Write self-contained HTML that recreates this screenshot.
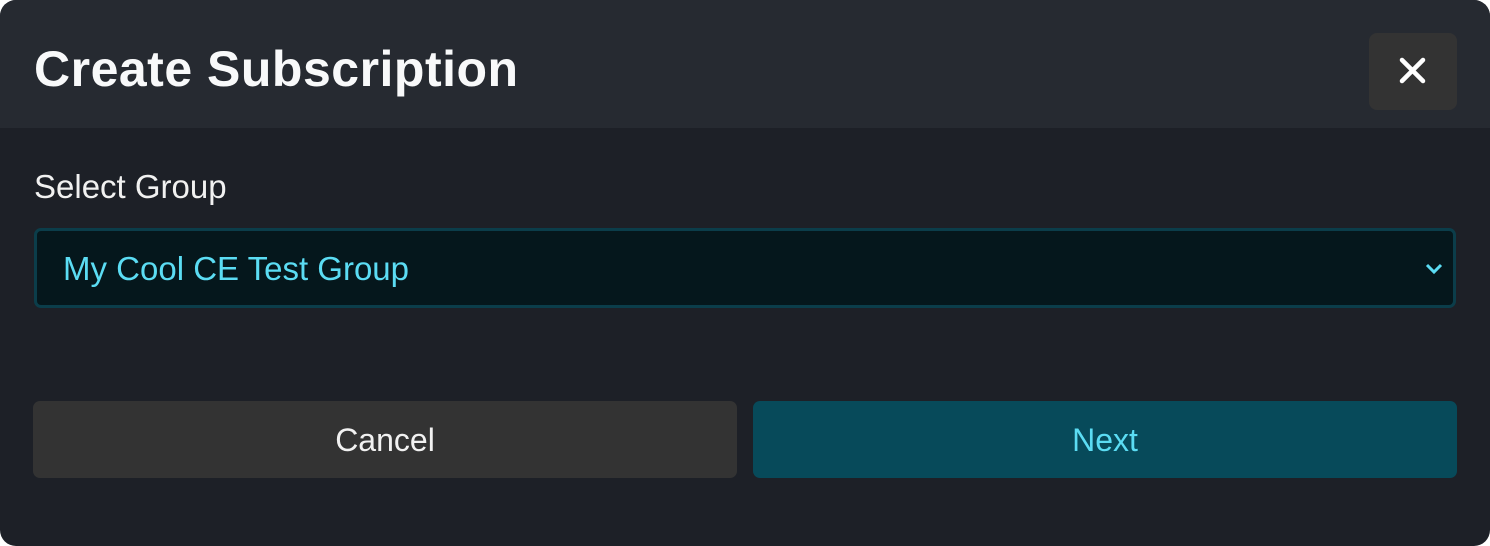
<!DOCTYPE html>
<html><head><style>
body{margin:0;background:#fff;width:1490px;height:546px;overflow:hidden;font-family:"Liberation Sans","Noto Sans CJK SC",sans-serif}
.m{position:absolute;left:0;top:0;width:1490px;height:546px;background:#1d2027;border-radius:16px;overflow:hidden}
.h{position:absolute;left:0;top:0;width:1490px;height:128px;background:#262a31}
.t{position:absolute;left:34px;top:40px;font-size:50px;font-weight:bold;color:#f8f9fa;letter-spacing:0.5px}
.x{position:absolute;left:1369px;top:33px;width:88px;height:77px;background:#333;border-radius:8px}
.l{position:absolute;left:34px;top:168px;font-size:33px;color:#f1f1f1}
.s{position:absolute;left:34px;top:228px;width:1416px;height:74px;background:#05171c;border:3px solid #0b3d4a;border-radius:7px}
.s span{position:absolute;left:26px;top:19px;font-size:33px;color:#5bdcf3}
.b{position:absolute;top:401px;width:704px;height:77px;border-radius:7px;font-size:32px;text-align:center;line-height:79px}
</style></head><body>
<div class="m">
<div class="h"></div>
<div class="t">Create Subscription</div>
<div class="x"><svg width="88" height="77"><path d="M33 27L54 48M54 27L33 48" stroke="#fff" stroke-width="4.5" stroke-linecap="round"/></svg></div>
<div class="l">Select Group</div>
<div class="s"><span>My Cool CE Test Group</span>
<svg style="position:absolute;left:1387px;top:31px" width="20" height="14"><path d="M3 3L10 10L17 3" stroke="#5bdcf3" stroke-width="3" fill="none"/></svg></div>
<div class="b" style="left:33px;background:#333;color:#f1f1f1">Cancel</div>
<div class="b" style="left:753px;background:#074a5a;color:#5bdcf3">Next</div>
</div>
</body></html>
